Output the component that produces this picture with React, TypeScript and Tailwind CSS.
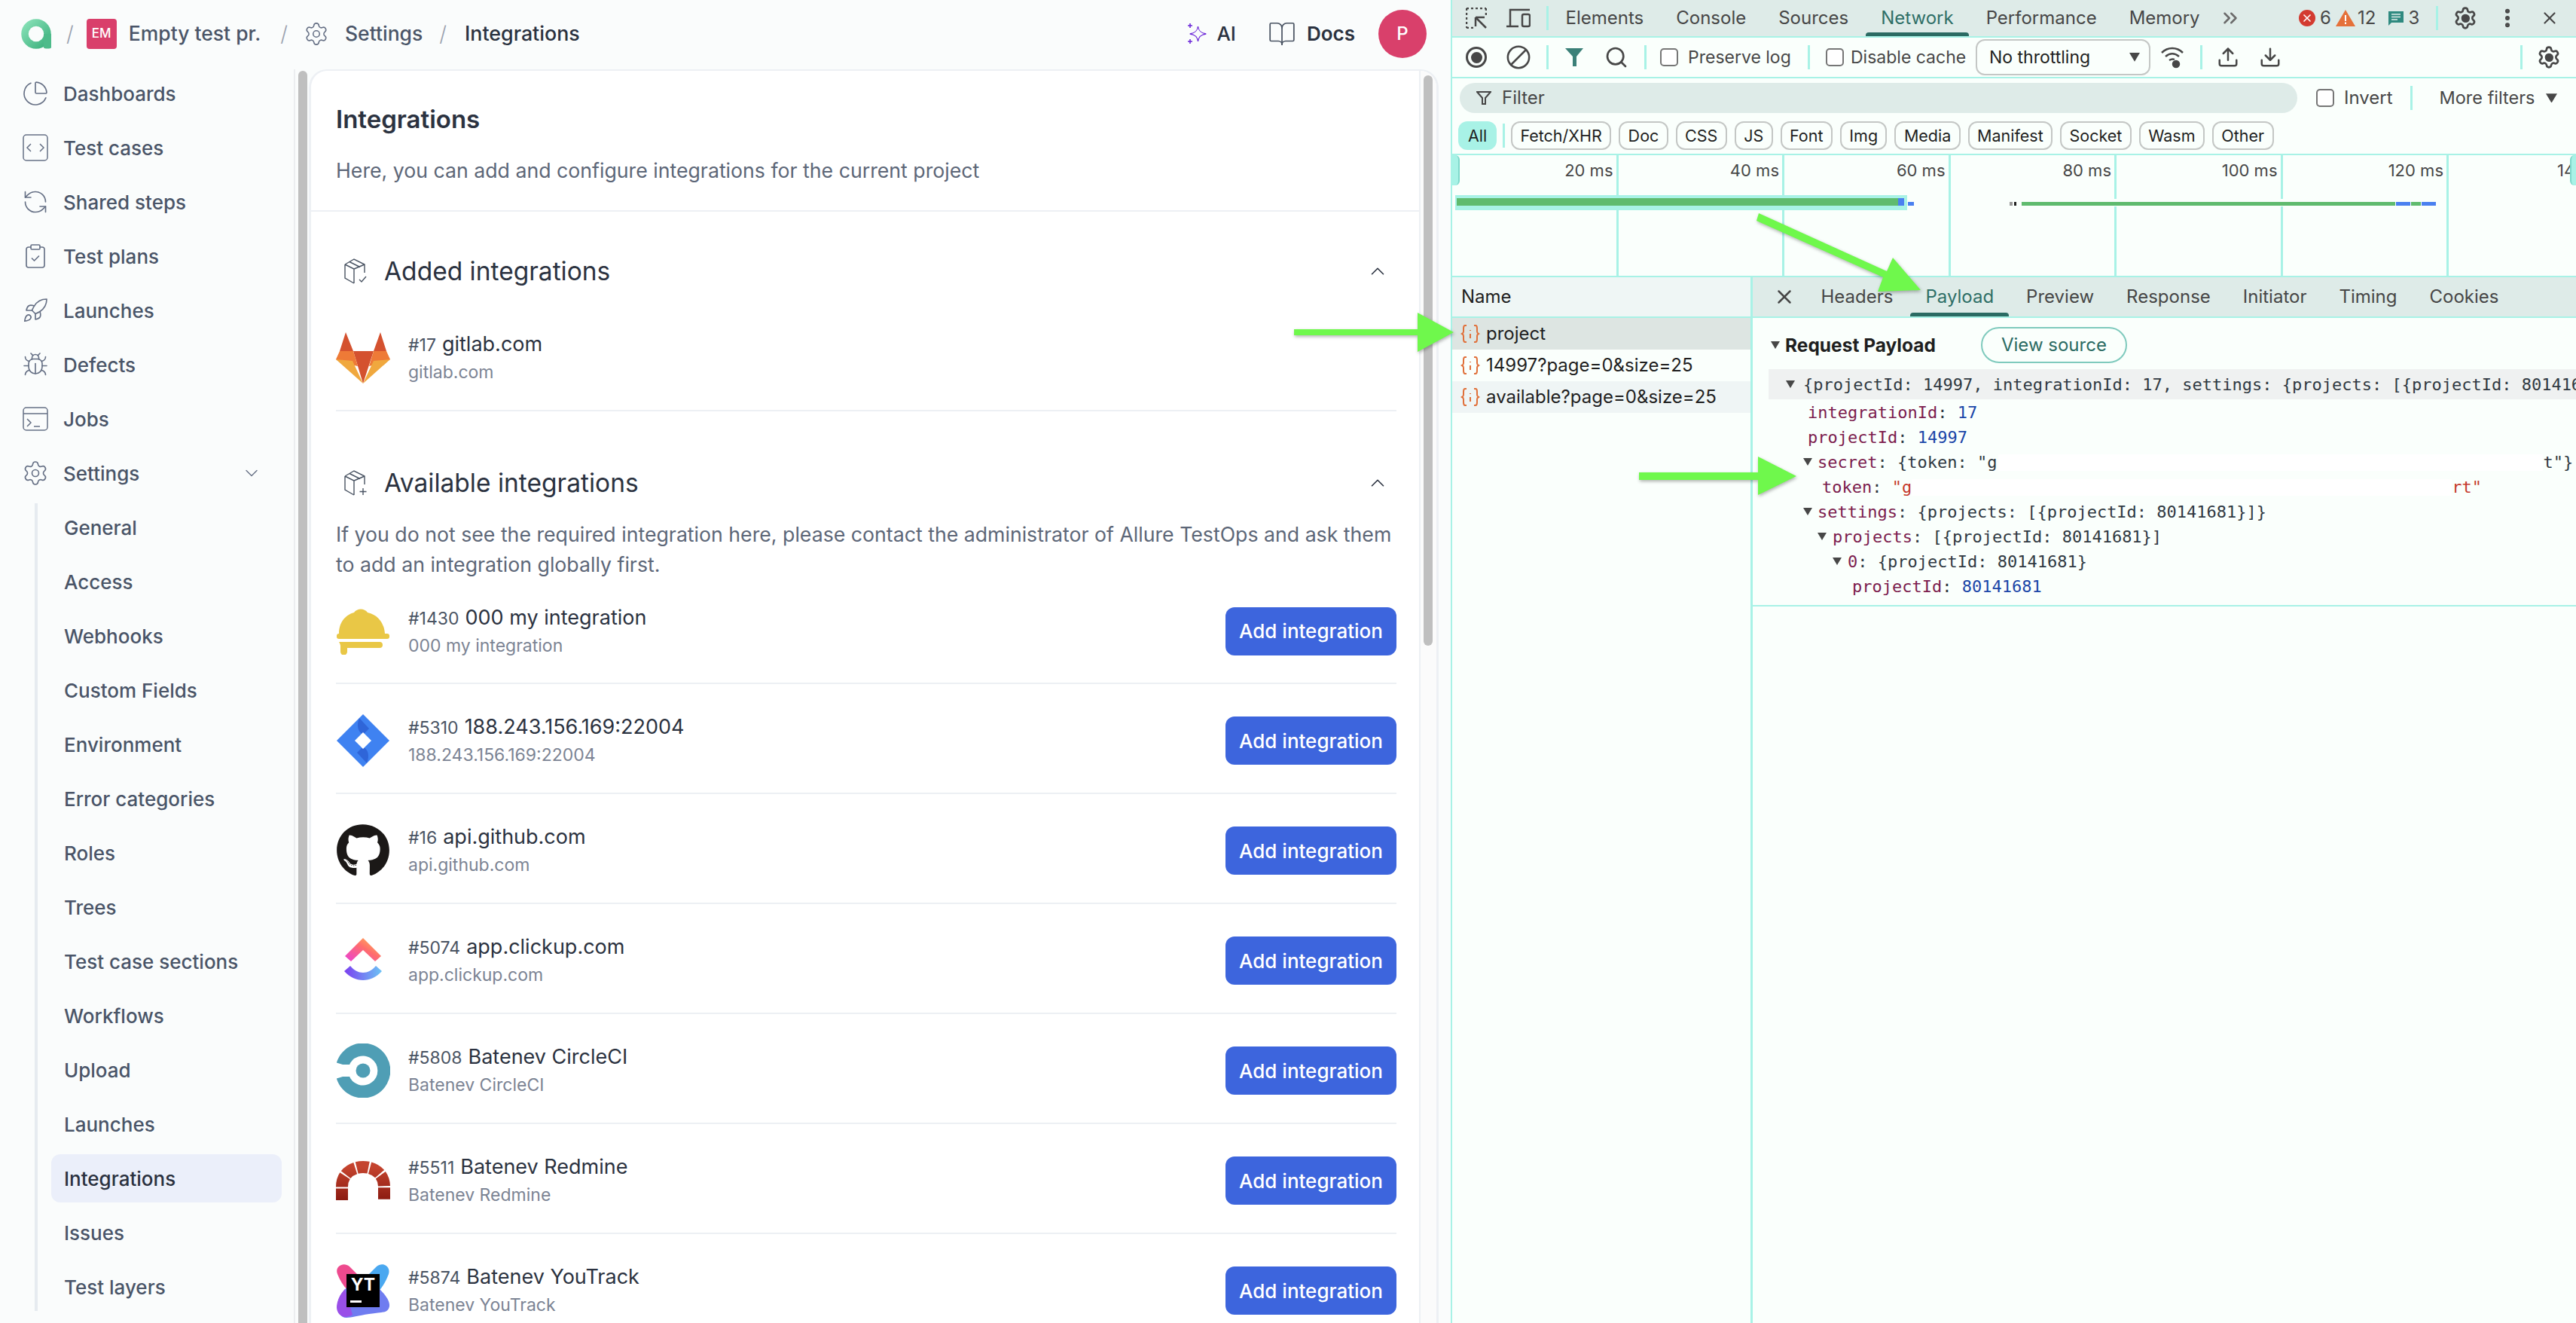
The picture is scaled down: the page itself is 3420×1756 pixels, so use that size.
import { Bug, ChartPie, ChevronDown, ChevronUp, ClipboardCheck, Rocket, RefreshCcw, Settings, BookOpen, Search, Ban, Upload, Download, X, ChevronsRight, EllipsisVertical } from "lucide-react";
import { FaGithub } from "react-icons/fa";
import type { ReactNode } from "react";

const ic = { size: 36, strokeWidth: 1.1, color: "#667085" };

const TestCasesIcon = () => (
  <svg width="36" height="36" viewBox="0 0 36 36" fill="none" stroke="#667085" strokeWidth="1.5">
    <rect x="2" y="1" width="32" height="34" rx="4" />
    <path d="M12 13l-5 5 5 5M24 13l5 5-5 5" />
  </svg>
);

const JobsIcon = () => (
  <svg width="36" height="36" viewBox="0 0 36 36" fill="none" stroke="#667085" strokeWidth="1.5">
    <rect x="2" y="3" width="32" height="30" rx="4" />
    <path d="M2 11h32M7 18l5 5-5 5M16 28h8" />
  </svg>
);

const BoxIcon = ({ plus }: { plus?: boolean }) => (
  <svg width="36" height="36" viewBox="0 0 36 36" fill="none" stroke="#4a5463" strokeWidth="1.4">
    <path d="M3 9L15 2l14 7v11M3 9v18l12 7M3 9l12 6v19M15 15l14-6M9 5.5l14 7" />
    {plus ? <path d="M27 25v9M22.500 29.500h9" /> : <path d="M22 29l3 3 6-7" />}
  </svg>
);

const sidebarTop: { label: string; icon: ReactNode }[] = [
  { label: "Dashboards", icon: <ChartPie {...ic} /> },
  { label: "Test cases", icon: <TestCasesIcon /> },
  { label: "Shared steps", icon: <RefreshCcw {...ic} /> },
  { label: "Test plans", icon: <ClipboardCheck {...ic} /> },
  { label: "Launches", icon: <Rocket {...ic} /> },
  { label: "Defects", icon: <Bug {...ic} /> },
  { label: "Jobs", icon: <JobsIcon /> },
];

const sidebarSub = [
  "General",
  "Access",
  "Webhooks",
  "Custom Fields",
  "Environment",
  "Error categories",
  "Roles",
  "Trees",
  "Test case sections",
  "Workflows",
  "Upload",
  "Launches",
  "Integrations",
  "Issues",
  "Test layers",
];

const GitlabLogo = () => (
  <svg width="72" height="68" viewBox="0 0 72 68">
    <path d="M13 0L5 25h18zM59 0l-9 25h17zM23 25h27L36 68z" fill="#d4512f" />
    <path d="M5 25h18l6 20L6 40 0 36zM67 25H50l-6 20 21-5 7-4z" fill="#ee7a37" />
    <path d="M0 36l36 32-14-30zM72 36L36 68l14-30z" fill="#f0a83e" />
  </svg>
);

const HatLogo = () => (
  <svg width="72" height="62" viewBox="0 0 72 62" fill="#e9c746">
    <path d="M4 34C4 16 16 8 24 6c4-6 14-6 18 0 14 3 22 14 23 28z" />
    <rect x="1" y="34" width="70" height="7" rx="3" />
    <path d="M4 45h54a3 3 0 010 8H15v5a4 4 0 01-9 0v-8c0-2-2-5-2-5z" />
  </svg>
);

const JiraLogo = () => (
  <svg width="72" height="72" viewBox="0 0 72 72">
    <path d="M36 1l35 35-35 35L1 36z" fill="#3f82f1" />
    <path d="M31 6c-4 10-2 18 5 22l8-8zM41 66c4-10 2-18-5-22l-8 8z" fill="#2f65d8" />
    <path d="M36 25l11 11-11 11-11-11z" fill="#fff" />
  </svg>
);

const ClickupLogo = () => (
  <svg width="72" height="72" viewBox="0 0 72 72" fill="none">
    <defs>
      <linearGradient id="cu1" x1="0" y1="1" x2="1" y2="0">
        <stop offset="0" stopColor="#e93fd6" />
        <stop offset="0.55" stopColor="#ff6d6d" />
        <stop offset="1" stopColor="#ffc74f" />
      </linearGradient>
      <linearGradient id="cu2" x1="0" y1="0" x2="1" y2="0">
        <stop offset="0" stopColor="#7b3ff0" />
        <stop offset="1" stopColor="#6cc4f5" />
      </linearGradient>
    </defs>
    <path d="M12 30L36 6l24 24-8 7-16-15-16 15z" fill="url(#cu1)" />
    <path d="M19 44c10 12 24 12 34 0l8 7c-14 16-36 16-50 0z" fill="url(#cu2)" transform="translate(0 -1)" />
  </svg>
);

const CircleLogo = () => (
  <svg width="72" height="72" viewBox="0 0 72 72" fill="none">
    <path d="M9 44A28 28 0 1 0 9 28" stroke="#4f9eb5" strokeWidth="17" />
    <rect x="0" y="28" width="26" height="16" fill="#fff" />
    <circle cx="36" cy="36" r="9.500" fill="#4f9eb5" />
  </svg>
);

const RedmineLogo = () => (
  <svg width="72" height="52" viewBox="0 0 72 52" fill="none">
    <defs>
      <linearGradient id="rd" x1="0" y1="0" x2="0" y2="1">
        <stop offset="0" stopColor="#c4432e" />
        <stop offset="1" stopColor="#8b1a10" />
      </linearGradient>
    </defs>
    <path
      d="M8 52V34C8 18 20 8 36 8s28 10 28 26v18"
      stroke="url(#rd)"
      strokeWidth="16"
      strokeDasharray="15.500 2"
    />
  </svg>
);

const YoutrackLogo = () => (
  <svg width="72" height="72" viewBox="0 0 72 72">
    <path d="M2 14C-2 4 10-3 18 4l12 12-14 20C10 30 5 22 2 14z" fill="#ee4a8e" />
    <path d="M70 14c3-10-8-17-16-10L38 20l18 18c7-8 11-16 14-24z" fill="#4aa8f0" />
    <path d="M2 56c0-12 10-24 20-30l36 8c8 8 16 18 12 26-3 6-12 5-26 7-14 2-24 5-30 5-8 0-12-8-12-16z" fill="#6f7cf0" />
    <path d="M1 58c0-8 5-18 11-24l10 34c-3 2-7 3-9 3-7 0-12-6-12-13z" fill="#9a4fe8" />
    <rect x="14" y="14" width="44" height="44" fill="#000" />
    <text x="36" y="36" textAnchor="middle" fill="#fff" fontSize="23" fontWeight="700" fontFamily="Inter, sans-serif">
      YT
    </text>
    <rect x="19" y="49" width="15" height="3" fill="#fff" />
  </svg>
);

const AiIcon = () => (
  <svg width="28" height="28" viewBox="0 0 28 28" fill="none" stroke="#6d28d9" strokeWidth="1.300">
    <path d="M15 4c1 6 4 9 12 10-8 1-11 4-12 10-1-6-4-9-12-10 8-1 11-4 12-10z" transform="translate(1 0) scale(0.9 1)" />
    <path d="M4 0v6M1 3h6M4 21v6M1 24h6" strokeWidth="1.600" />
  </svg>
);

const AppLogo = () => (
  <svg width="40" height="40" viewBox="0 0 40 40" fill="none">
    <defs>
      <linearGradient id="al" x1="0" y1="0" x2="1" y2="1">
        <stop offset="0" stopColor="#86e0b6" />
        <stop offset="1" stopColor="#3fb27f" />
      </linearGradient>
    </defs>
    <circle cx="20" cy="20" r="15" stroke="url(#al)" strokeWidth="9.500" />
    <path d="M30 20v18c0 2 10 2 10 0V20z" fill="#4dbb8a" />
  </svg>
);

const integrations = [
  { id: "#1430", name: "000 my integration", logo: <HatLogo /> },
  { id: "#5310", name: "188.243.156.169:22004", logo: <JiraLogo /> },
  { id: "#16", name: "api.github.com", logo: <FaGithub size={72} color="#1b1817" /> },
  { id: "#5074", name: "app.clickup.com", logo: <ClickupLogo /> },
  { id: "#5808", name: "Batenev CircleCI", logo: <CircleLogo /> },
  { id: "#5511", name: "Batenev Redmine", logo: <RedmineLogo /> },
  { id: "#5874", name: "Batenev YouTrack", logo: <YoutrackLogo /> },
];

const IntegrationRow = ({
  id,
  name,
  logo,
  added,
  first,
}: {
  id: string;
  name: string;
  logo: ReactNode;
  added?: boolean;
  first?: boolean;
}) => {
  return (
    <div
      className={`flex items-center border-b-2 border-[#edf0f4] shrink-0 ${
        first ? "h-[139px]" : "h-[146px] pt-[6px]"
      }`}
    >
      <div className="w-[72px] h-[80px] mr-[24px] flex items-center justify-center">{logo}</div>
      <div className="flex-1">
        <div className="h-[36px] leading-[36px] whitespace-nowrap">
          <span className="text-[23px] text-[#4a5463] mr-[8px]">{id}</span>
          <span className="text-[27px] text-[#2b3240]">{name}</span>
        </div>
        <div className="h-[36px] leading-[38px] text-[23px] text-[#7c8494] whitespace-nowrap">{name}</div>
      </div>
      {!added && (
        <button className="w-[227px] h-[64px] rounded-[12px] bg-[#3d65dd] text-white text-[26px] font-medium">
          Add integration
        </button>
      )}
    </div>
  );
};

const Sidebar = () => {
  return (
    <div className="w-[392px] h-full border-r-2 border-[#eceef0] overflow-hidden flex flex-col gap-2 shrink-0">
      {sidebarTop.map((item) => (
        <div key={item.label} className="h-[64px] flex items-center shrink-0 pl-[29px]">
          <div className="w-[36px] mr-[19px] flex justify-center">{item.icon}</div>
          <span className="text-[26px] font-medium text-[#4a5568]">{item.label}</span>
        </div>
      ))}
      <div className="h-[64px] flex items-center shrink-0 pl-[29px]">
        <div className="w-[36px] mr-[19px] flex justify-center">
          <Settings {...ic} />
        </div>
        <span className="text-[26px] font-medium text-[#4a5568] flex-1">Settings</span>
        <ChevronDown size={28} strokeWidth={1.2} color="#667085" className="mr-[42px]" />
      </div>
      <div className="ml-[46px] border-l-4 border-[#e6ebf0] flex flex-col gap-2 pl-[18px] pr-[16px]">
        {sidebarSub.map((label) => (
          <div
            key={label}
            className={`h-[64px] flex items-center shrink-0 pl-[17px] rounded-[12px] text-[26px] font-medium ${
              label === "Integrations" ? "bg-[#ebeffa] text-[#2b3240]" : "text-[#4a5568]"
            }`}
          >
            {label}
          </div>
        ))}
      </div>
    </div>
  );
};

const Card = () => {
  return (
    <div className="w-[1500px] h-full flex border-t-2 border-x-[3px] border-[#edf0f4] rounded-t-[24px] overflow-hidden bg-white">
      <div className="w-[1473px] h-full border-r-2 border-[#edf0f4] flex flex-col">
        <div className="h-[187px] shrink-0 border-b-2 border-[#edf0f4] pt-[44px] pl-[33px]">
          <div className="text-[33px] leading-[40px] font-semibold text-[#2b3240]">Integrations</div>
          <div className="text-[26.700px] leading-[40px] mt-[28px] text-[#5d6778]">
            Here, you can add and configure integrations for the current project
          </div>
        </div>
        <div className="pl-[33px] pr-[30px] flex flex-col">
          <div className="flex items-center h-[44px] mt-[57px] mb-[18px] shrink-0 pl-[9px]">
            <BoxIcon />
            <span className="text-[33.500px] text-[#2b3240] ml-[19px] flex-1">Added integrations</span>
            <ChevronUp size={30} strokeWidth={1.300} color="#2b3240" className="mr-[10px]" />
          </div>
          <IntegrationRow id="#17" name="gitlab.com" logo={<GitlabLogo />} added />
          <div className="flex items-center h-[44px] mt-[73px] shrink-0 pl-[9px]">
            <BoxIcon plus />
            <span className="text-[33.500px] text-[#2b3240] ml-[19px] flex-1">Available integrations</span>
            <ChevronUp size={30} strokeWidth={1.300} color="#2b3240" className="mr-[10px]" />
          </div>
          <div className="mt-[26px] text-[26.700px] leading-[40px] text-[#5d6778] shrink-0 whitespace-nowrap">
            If you do not see the required integration here, please contact the administrator of Allure TestOps and ask them
            <br />
            to add an integration globally first.
          </div>
          {integrations.map((it, i) => (
            <IntegrationRow key={it.id} id={it.id} name={it.name} logo={it.logo} first={i === 0} />
          ))}
        </div>
      </div>
      <div className="flex-1 bg-[#fbfbfb] pt-[6px] pl-[4px]">
        <div className="w-[12px] h-[757px] rounded-full bg-[#bfbfbf]" />
      </div>
    </div>
  );
};

const AppSide = () => {
  return (
    <div className="w-[1926px] h-full shrink-0 flex flex-col bg-[#fafcfc]">
      <div className="h-[92px] shrink-0 flex items-center pb-[3px]">
        <div className="ml-[28px]">
          <AppLogo />
        </div>
        <span className="ml-[20px] text-[28px] font-light text-[#9aa2af]">/</span>
        <div className="ml-[17px] w-[40px] h-[40px] rounded-[4px] bg-[#d93f6b] text-white text-[17px] font-medium flex items-center justify-center">
          EM
        </div>
        <span className="ml-[16px] text-[26.500px] font-medium text-[#4a5568]">Empty test pr.</span>
        <span className="ml-[26px] text-[28px] font-light text-[#9aa2af]">/</span>
        <div className="ml-[21px]">
          <Settings size={34} strokeWidth={1.1} color="#667085" />
        </div>
        <span className="ml-[21px] text-[26.500px] font-medium text-[#4a5568]">Settings</span>
        <span className="ml-[22px] text-[28px] font-light text-[#9aa2af]">/</span>
        <span className="ml-[24px] text-[26.800px] font-medium text-[#2b3240]">Integrations</span>
        <div className="flex-1" />
        <AiIcon />
        <span className="ml-[11px] text-[26px] font-medium text-[#2b3240]">AI</span>
        <div className="ml-[42px]">
          <BookOpen size={38} strokeWidth={1.100} color="#4a5463" />
        </div>
        <span className="ml-[14px] text-[26px] font-semibold text-[#2b3240]">Docs</span>
        <div className="ml-[31px] mr-[32px] w-[64px] h-[64px] rounded-full bg-[#d9406b] text-white text-[24px] font-medium flex items-center justify-center">
          P
        </div>
      </div>
      <div className="flex-1 flex min-h-0">
        <Sidebar />
        <div className="w-[18px] shrink-0 pt-[2px] pl-[4px]">
          <div className="w-[12px] h-full rounded-t-full bg-[#bfbfbf]" />
        </div>
        <Card />
      </div>
    </div>
  );
};

const Divider = ({ className }: { className: string }) => <div className={`w-[3px] bg-[#a8f2e6] shrink-0 ${className}`} />;

const Check = ({ className }: { className: string }) => (
  <div className={`w-[24px] h-[24px] rounded-[5px] border-2 border-[#767676] bg-white shrink-0 ${className}`} />
);

const DevGear = ({ className }: { className: string }) => (
  <div className={`relative w-[32px] h-[32px] ${className}`}>
    <Settings size={32} strokeWidth={2} color="#474747" />
    <div className="absolute left-[10.500px] top-[10.500px] w-[11px] h-[11px] rounded-full bg-[#474747]" />
  </div>
);

const Triangle = ({ className, size = 12 }: { className?: string; size?: number }) => (
  <svg width={size} height={size * 0.85} viewBox="0 0 12 10" className={className}>
    <path d="M0 0h12L6 10z" fill="#474747" />
  </svg>
);

const topTabs = ["Elements", "Console", "Sources", "Network", "Performance", "Memory"];
const detailTabs = ["Headers", "Payload", "Preview", "Response", "Initiator", "Timing", "Cookies"];
const chips = ["Fetch/XHR", "Doc", "CSS", "JS", "Font", "Img", "Media", "Manifest", "Socket", "Wasm", "Other"];
const ticks = ["20 ms", "40 ms", "60 ms", "80 ms", "100 ms", "120 ms"];

const Tab = ({ label, active }: { label: string; active: boolean }) => {
  return (
    <div className="h-full flex flex-col px-[21.500px]">
      <div className={`flex-1 flex items-center pt-[4px] text-[24px] ${active ? "text-[#2f6f67]" : "text-[#474747]"}`}>{label}</div>
      <div className={`h-[5px] -mx-[20px] rounded-t-[4px] ${active ? "bg-[#2b6b63]" : ""}`} />
    </div>
  );
};

const FileIcon = () => (
  <svg width="26" height="26" viewBox="0 0 26 26" fill="none" stroke="#e0703a" strokeWidth="2" className="shrink-0">
    <path d="M8 2H6C4 2 4 4 4 6v4c0 2-2 3-2 3s2 1 2 3v4c0 2 0 4 2 4h2M18 2h2c2 0 2 2 2 4v4c0 2 2 3 2 3s-2 1-2 3v4c0 2 0 4-2 4h-2" />
    <path d="M13 8v1M13 13v6" />
  </svg>
);

const k = "text-[#7c1d4e]";
const v = "text-[#303942]";
const n = "text-[#1a46a8]";

const PayloadTree = () => {
  return (
    <div className="font-['DejaVu_Sans_Mono',monospace] text-[22px] whitespace-nowrap">
      <div className="h-[40px] mt-[8px] ml-[21px] bg-[#eff1f1] flex items-center pl-[23px] overflow-hidden">
        <Triangle className="mr-[11px] shrink-0" />
        <span className="text-[#303942]">
          {"{projectId: 14997, integrationId: 17, settings: {projects: [{projectId: 80141681}]}}"}
        </span>
      </div>
      <div className="h-[33px] mt-[1px] pl-[73px] flex items-center">
        <span className={k}>integrationId</span>
        <span className={v}>:&nbsp;</span>
        <span className={n}>17</span>
      </div>
      <div className="h-[33px] pl-[73px] flex items-center">
        <span className={k}>projectId</span>
        <span className={v}>:&nbsp;</span>
        <span className={n}>14997</span>
      </div>
      <div className="h-[33px] pl-[67px] flex items-center">
        <Triangle className="mr-[7px]" />
        <span className={k}>secret</span>
        <span className={v}>: {'{token: "g'}</span>
        <div className="h-[22px] w-[723px] bg-white ml-[2px] shrink-0" />
        <span className={v}>{'t"}'}</span>
      </div>
      <div className="h-[33px] pl-[92px] flex items-center">
        <span className={k}>token</span>
        <span className={v}>:&nbsp;</span>
        <span className="text-[#c5392c]">"g</span>
        <div className="h-[22px] w-[717px] bg-white shrink-0" />
        <span className="text-[#c5392c]">rt"</span>
      </div>
      <div className="h-[33px] pl-[67px] flex items-center">
        <Triangle className="mr-[7px]" />
        <span className={k}>settings</span>
        <span className={v}>: {"{projects: [{projectId: 80141681}]}"}</span>
      </div>
      <div className="h-[33px] pl-[86px] flex items-center">
        <Triangle className="mr-[8px]" />
        <span className={k}>projects</span>
        <span className={v}>: {"[{projectId: 80141681}]"}</span>
      </div>
      <div className="h-[33px] pl-[106px] flex items-center">
        <Triangle className="mr-[8px]" />
        <span className={k}>0</span>
        <span className={v}>: {"{projectId: 80141681}"}</span>
      </div>
      <div className="h-[33px] pl-[132px] flex items-center">
        <span className={k}>projectId</span>
        <span className={v}>:&nbsp;</span>
        <span className={n}>80141681</span>
      </div>
    </div>
  );
};

const DevTools = () => {
  return (
    <div className="flex-1 h-full border-l-2 border-[#a8f2e6] bg-[#fafffc] flex flex-col text-[#474747] min-w-0">
      {/* tab strip */}
      <div className="h-[50px] shrink-0 bg-[#deebe8] border-b-2 border-[#a8f2e6] flex items-center">
        <svg width="28" height="28" viewBox="0 0 28 28" fill="none" stroke="#474747" strokeWidth="2.500" className="ml-[18px]">
          <path d="M1 1h26M1 1v26M27 1v10M1 27h10" strokeDasharray="3 3" />
          <path d="M13 13h12M13 13v12M13 13l14 14" />
        </svg>
        <svg width="32" height="26" viewBox="0 0 32 26" fill="none" stroke="#474747" strokeWidth="2.500" className="ml-[26px]">
          <path d="M5 24V2h26M0 24h16" />
          <rect x="21" y="8" width="10" height="16" rx="2" />
        </svg>
        <Divider className="h-[32px] ml-[21px] mr-[1px]" />
        <div className="flex h-full">
          {topTabs.map((t) => (
            <Tab key={t} label={t} active={t === "Network"} />
          ))}
        </div>
        <ChevronsRight size={30} strokeWidth={2} color="#6b6b6b" className="ml-[4px]" />
        <div className="w-[22px] h-[22px] rounded-full bg-[#d33b30] flex items-center justify-center ml-[76px] shrink-0">
          <X size={16} strokeWidth={2.500} color="#fff" />
        </div>
        <span className="text-[24px] ml-[6px]">6</span>
        <svg width="26" height="22" viewBox="0 0 26 22" className="ml-[6px] shrink-0">
          <path d="M13 0l13 22H0z" fill="#e5713a" />
          <path d="M12 7h2v8h-2zM12 16.500h2v2.500h-2z" fill="#fff" />
        </svg>
        <span className="text-[24px] ml-[3px]">12</span>
        <svg width="22" height="22" viewBox="0 0 22 22" className="ml-[16px] shrink-0">
          <path d="M1 2h20v15H5l-4 4z" fill="#2f8a80" />
          <path d="M5 6h12M5 9.500h12M5 13h8" stroke="#deebe8" strokeWidth="1.500" />
        </svg>
        <span className="text-[24px] ml-[5px]">3</span>
        <Divider className="h-[32px] ml-[22px]" />
        <DevGear className="ml-[20px]" />
        <EllipsisVertical size={32} strokeWidth={2.500} color="#474747" className="ml-[24px]" />
        <X size={26} strokeWidth={2} color="#474747" className="ml-[27px]" />
      </div>

      {/* network toolbar */}
      <div className="h-[54px] shrink-0 border-b-2 border-[#a8f2e6] flex items-center text-[23px]">
        <div className="ml-[18px] w-[28px] h-[28px] rounded-full border-[3px] border-[#474747] flex items-center justify-center shrink-0">
          <div className="w-[15px] h-[15px] rounded-full bg-[#474747]" />
        </div>
        <Ban size={34} strokeWidth={1.800} color="#474747" className="ml-[25px] -scale-x-100 shrink-0" />
        <Divider className="h-[32px] ml-[20px]" />
        <svg width="24" height="24" viewBox="0 0 24 24" className="ml-[22px] shrink-0">
          <path d="M0 0h24L15 11v13h-5V11z" fill="#3b8078" />
        </svg>
        <Search size={32} strokeWidth={2} color="#474747" className="ml-[28px] shrink-0" />
        <Divider className="h-[32px] ml-[21px]" />
        <Check className="ml-[18px]" />
        <span className="ml-[13px] w-[139px] whitespace-nowrap">Preserve log</span>
        <Divider className="h-[32px] ml-[20px]" />
        <Check className="ml-[21px]" />
        <span className="ml-[9px] w-[158px] whitespace-nowrap">Disable cache</span>
        <div className="ml-[8px] w-[232px] h-[48px] rounded-[12px] border-2 border-[#c4c7c5] flex items-center pl-[16px] pr-[12px] text-[#1f1f1f] shrink-0">
          <span className="flex-1 whitespace-nowrap">No throttling</span>
          <Triangle size={14} />
        </div>
        <svg width="32" height="32" viewBox="0 0 32 32" fill="none" stroke="#474747" strokeWidth="2.500" className="ml-[13px] shrink-0">
          <path d="M2 10c8-8 20-8 28 0M7 15c6-5 12-5 18 0M12 20c3-2 5-2 7-1" />
          <circle cx="21" cy="25" r="4" fill="#474747" />
        </svg>
        <Divider className="h-[32px] ml-[21px]" />
        <Upload size={30} strokeWidth={2} color="#474747" className="ml-[19px] shrink-0" />
        <Download size={30} strokeWidth={2} color="#474747" className="ml-[26px] shrink-0" />
        <div className="flex-1" />
        <Divider className="h-[32px] mr-[19px]" />
        <DevGear className="mr-[20px]" />
      </div>

      {/* filters */}
      <div className="h-[102px] shrink-0 border-b-2 border-[#a8f2e6] flex flex-col pt-[6px]">
        <div className="h-[40px] flex items-center">
          <div className="ml-[10px] w-[1112px] h-[40px] rounded-full bg-[#deebe8] flex items-center pl-[22px]">
            <svg width="20" height="20" viewBox="0 0 20 20" fill="none" stroke="#474747" strokeWidth="2">
              <path d="M1 2h18l-7 8v8H8v-8z" />
            </svg>
            <span className="text-[24px] ml-[14px]">Filter</span>
          </div>
          <Check className="ml-[25px]" />
          <span className="text-[24px] ml-[13px]">Invert</span>
          <Divider className="h-[32px] ml-[23px]" />
          <span className="text-[23.500px] ml-[36px] whitespace-nowrap">More filters</span>
          <Triangle size={15} className="ml-[15px]" />
        </div>
        <div className="h-[38px] mt-[11px] flex items-center text-[21.500px] text-[#1f1f1f]">
          <div className="ml-[8px] w-[51px] h-[38px] rounded-[12px] bg-[#a8f2e6] flex items-center justify-center">All</div>
          <Divider className="h-[32px] ml-[8px] mr-[8px]" />
          <div className="flex gap-[10px]">
            {chips.map((c) => (
              <div key={c} className="h-[38px] px-[10.400px] rounded-[12px] border-2 border-[#c4c7c5] flex items-center whitespace-nowrap">
                {c}
              </div>
            ))}
          </div>
        </div>
      </div>

      {/* timeline overview */}
      <div className="relative h-[162px] shrink-0 border-b-2 border-[#a8f2e6] flex">
        {ticks.map((t) => (
          <div key={t} className="w-[220.500px] shrink-0 h-full border-r-[3px] border-[#a8f2e6] text-right pr-[4px] pt-[7px] text-[22px] leading-[26px] whitespace-nowrap">
            {t}
          </div>
        ))}
        <div className="flex-1 overflow-hidden pl-[144px] pt-[7px] text-[22px] leading-[26px]">140</div>
        <div className="absolute left-0 top-0 w-[10px] h-[40px] rounded-r-[6px] bg-[#a8f2e6] border-r-2 border-[#7fd8cb]" />
        <div className="absolute right-0 top-0 w-[8px] h-[40px] rounded-l-[6px] bg-[#a8f2e6] border-l-2 border-[#7fd8cb]" />
        <svg width="1492" height="40" viewBox="0 0 1492 40" className="absolute left-0 top-[51px]">
          <rect x="4" y="2" width="600" height="20" fill="#a8f2e6" />
          <rect x="6" y="6" width="586" height="10" fill="#5fbb6e" />
          <rect x="592" y="6" width="8" height="10" fill="#4a80f0" />
          <rect x="605" y="11" width="8" height="5" fill="#4a80f0" />
          <rect x="740" y="7" width="512" height="10" fill="#fafffc" />
          <rect x="740" y="11" width="4" height="5" fill="#999" />
          <rect x="746" y="11" width="3" height="5" fill="#222" />
          <rect x="756" y="11" width="496" height="5" fill="#5fbb6e" />
          <rect x="1253" y="11" width="19" height="5" fill="#4a80f0" />
          <rect x="1273" y="11" width="13" height="5" fill="#5fbb6e" />
          <rect x="1287" y="11" width="19" height="5" fill="#4a80f0" />
        </svg>
      </div>

      {/* requests + details */}
      <div className="flex-1 flex min-h-0">
        <div className="w-[399px] shrink-0 border-r-[3px] border-[#a8f2e6] flex flex-col">
          <div className="h-[54px] shrink-0 bg-[#eff6f5] border-b-2 border-[#a8f2e6] flex items-center pl-[12px] text-[24px] text-[#1f1f1f]">
            Name
          </div>
          <div className="h-[42px] bg-[#dde5e2] flex items-center pl-[11px] text-[24px] text-[#1f1f1f]">
            <FileIcon />
            <span className="ml-[8px]">project</span>
          </div>
          <div className="h-[42px] flex items-center pl-[11px] text-[24px] text-[#1f1f1f]">
            <FileIcon />
            <span className="ml-[8px]">14997?page=0&amp;size=25</span>
          </div>
          <div className="h-[42px] bg-[#eff5f5] flex items-center pl-[11px] text-[24px] text-[#1f1f1f]">
            <FileIcon />
            <span className="ml-[8px]">available?page=0&amp;size=25</span>
          </div>
        </div>
        <div className="flex-1 min-w-0 flex flex-col">
          <div className="h-[54px] shrink-0 bg-[#deebe8] border-b-2 border-[#a8f2e6] flex items-center">
            <X size={30} strokeWidth={2} color="#474747" className="ml-[27px] mr-[12px]" />
            {detailTabs.map((t) => (
              <Tab key={t} label={t} active={t === "Payload"} />
            ))}
          </div>
          <div className="h-[383px] shrink-0 border-b-2 border-[#a8f2e6] overflow-hidden">
            <div className="h-[60px] flex items-center pt-[12px]">
              <Triangle className="ml-[24px] mr-[2px]" />
              <span className="text-[24.500px] font-bold text-[#1f1f1f] whitespace-nowrap ml-[5px]">Request Payload</span>
              <div className="ml-[60px] w-[194px] h-[48px] rounded-full border-2 border-[#7fcabd] text-[24px] text-[#2b6b63] flex items-center justify-center">
                View source
              </div>
            </div>
            <PayloadTree />
          </div>
        </div>
      </div>
    </div>
  );
};

// green annotation arrows drawn on top of the screenshot
const Arrows = () => (
  <svg
    width="3420"
    height="1756"
    viewBox="0 0 3420 1756"
    className="absolute left-0 top-0 pointer-events-none drop-shadow-[1px_2px_2px_rgba(0,0,0,0.3)]"
    fill="#6ff84c"
  >
    <path d="M2335 283L2505 360L2513 342L2550 385L2493 387L2500 368L2332 293z" />
    <path d="M1718 437h164v-22l48 26-48 26v-22H1718z" />
    <path d="M2176 627h158v-21l51 26-51 25v-20H2176z" />
  </svg>
);

export default function App() {
  return (
    <div className="relative w-[3420px] h-[1756px] overflow-hidden flex font-['Inter',sans-serif]">
      <AppSide />
      <DevTools />
      <Arrows />
    </div>
  );
}
